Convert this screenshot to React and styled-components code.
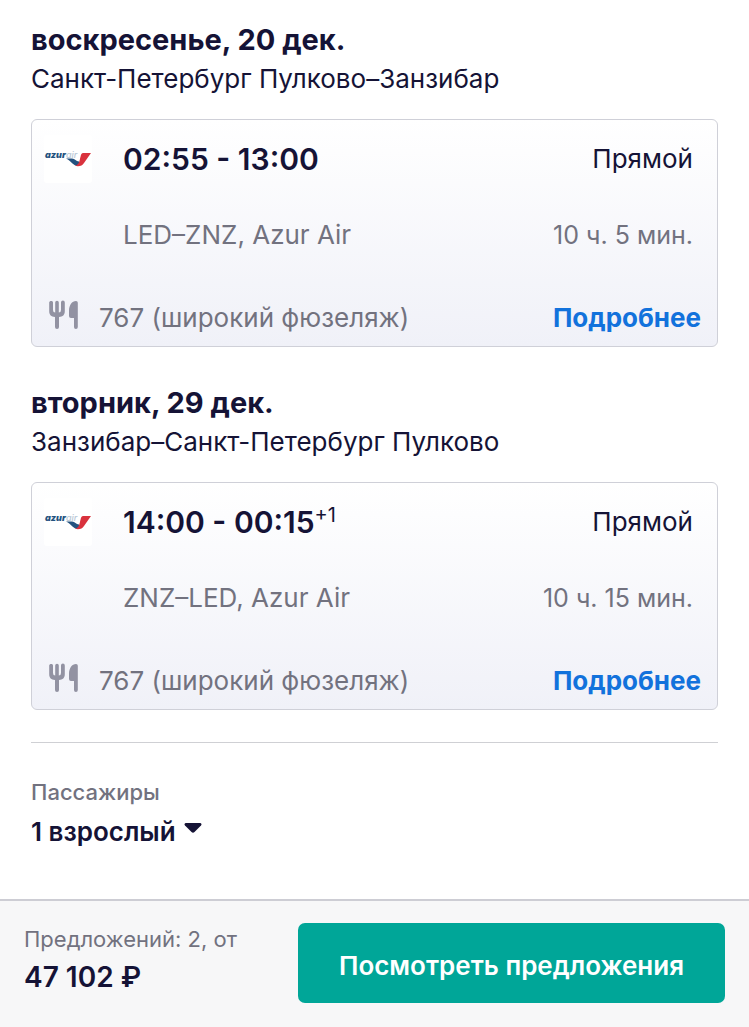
import React, { useState } from "react"
import styled, { createGlobalStyle } from "styled-components"

const GlobalStyle = createGlobalStyle`
  * {
    box-sizing: border-box;
  }
  body {
    margin: 0;
    background: #ffffff;
    color: #151336;
    font-family: Inter, "Noto Sans", sans-serif;
  }
`

const Page = styled.div`
  display: flex;
  flex-direction: column;
  min-height: 100vh;
`
const Content = styled.main`
  flex: 1;
  padding: 20px 31px 32px;
`
const StyledLeg = styled.section`
  margin-bottom: ${({ $last }) => ($last ? "32px" : "36px")};
`
const LegDate = styled.h2`
  margin: 0;
  font-size: 29px;
  font-weight: 700;
  line-height: 40px;
`
const LegRoute = styled.p`
  margin: 0 0 21px;
  font-size: 26px;
  line-height: 38px;
`
const Card = styled.div`
  padding: 19px 16px 8px 12px;
  border: 1px solid #cfd0d8;
  border-radius: 6px;
  background: linear-gradient(#ffffff, #f0f1f8);
`
const CardBody = styled.div`
  display: grid;
  grid-template-columns: 48px 1fr auto;
  row-gap: 36px;
  column-gap: 31px;
  padding-right: 8px;
  line-height: 40px;
`
const Logo = styled.svg`
  display: block;
  width: 48px;
  height: 48px;
  margin: -4px 0;
`
const Times = styled.div`
  font-size: 30px;
  font-weight: 600;
`
const NextDay = styled.sup`
  font-size: 20px;
  font-weight: 400;
  line-height: 0;
`
const Text = styled.div`
  font-size: 26px;
  color: ${({ $muted }) => ($muted ? "#72727f" : "#151336")};
`
const FlightText = styled(Text)`
  grid-column: 2;
`
const Stops = styled(Text)`
  text-align: right;
`
const Duration = styled(Text)`
  font-size: 25px;
  text-align: right;
`
const CardFooter = styled.div`
  display: flex;
  align-items: center;
  gap: 20px;
  margin-top: 43px;
  padding-left: 5px;
  line-height: 40px;
`
const Cutlery = styled.svg`
  width: 30px;
  height: 30px;
  margin-bottom: 6px;
`
const DetailsLink = styled.a`
  margin-left: auto;
  color: #1272dc;
  font-size: 26px;
  font-weight: 700;
  text-decoration: none;
`
const Passengers = styled.div`
  padding-top: 33px;
  border-top: 1px solid #cfd0d4;
`
const PassengersLabel = styled.label`
  display: block;
  color: #72727f;
  font-size: 22px;
  font-weight: 500;
  line-height: 32px;
`
const SelectRow = styled.div`
  display: flex;
  align-items: center;
  gap: 8px;
  margin-top: 4px;
`
const StyledSelect = styled.select`
  appearance: none;
  field-sizing: content;
  padding: 0;
  border: 0;
  background: transparent;
  color: inherit;
  font: 600 26px/40px Inter, "Noto Sans", sans-serif;
`
const Arrow = styled.svg`
  width: 18px;
  height: 12px;
  margin-bottom: 8px;
  pointer-events: none;
`
const BottomBar = styled.footer`
  display: flex;
  align-items: center;
  justify-content: space-between;
  padding: 22px 24px 24px;
  border-top: 2px solid #cdcdd4;
  background: #f7f7f8;
`
const Summary = styled.div`
  padding-bottom: 4px;
`
const OffersCount = styled.div`
  color: #72727f;
  font-size: 22px;
  line-height: 32px;
`
const Price = styled.div`
  font-size: 28px;
  font-weight: 600;
  line-height: 44px;
`
const OffersButton = styled.button`
  flex: 0 1 427px;
  height: 80px;
  padding: 6px 0 0;
  border: 0;
  border-radius: 7px;
  background: #00a698;
  color: #ffffff;
  font: 600 26px/40px Inter, "Noto Sans", sans-serif;
  cursor: pointer;
`

const legs = [
  {
    date: "воскресенье, 20 дек.",
    route: "Санкт-Петербург Пулково–Занзибар",
    times: "02:55 - 13:00",
    flight: "LED–ZNZ, Azur Air",
    duration: "10 ч. 5 мин.",
  },
  {
    date: "вторник, 29 дек.",
    route: "Занзибар–Санкт-Петербург Пулково",
    times: "14:00 - 00:15",
    nextDay: "+1",
    flight: "ZNZ–LED, Azur Air",
    duration: "10 ч. 15 мин.",
  },
]

const AzurLogo = () => (
  <Logo viewBox="0 0 48 48" role="img" aria-label="Azur Air">
    <rect width="48" height="48" rx="3" fill="#ffffff" />
    <text
      x="1"
      y="23"
      fontFamily="Inter, sans-serif"
      fontSize="9"
      fontWeight="900"
      fontStyle="italic"
      fill="#24527f"
    >
      azur
      <tspan fill="#b9c8d6" fontWeight="500">
        air
      </tspan>
    </text>
    <path d="M22 23.500h6c3 0 4 3 7 3l1 4.500c-7 1-8-5-14-7.500z" fill="#24527f" />
    <path d="M39.500 18h7.500l-7 10c-2 3-4 3.500-9 3 3-1 4-3 5-7 1-4 1-6 3.500-6z" fill="#d9323d" />
  </Logo>
)

const Leg = ({ leg, last }) => (
  <StyledLeg $last={last}>
    <LegDate>{leg.date}</LegDate>
    <LegRoute>{leg.route}</LegRoute>
    <Card>
      <CardBody>
        <AzurLogo />
        <Times>
          {leg.times}
          {leg.nextDay && <NextDay>{leg.nextDay}</NextDay>}
        </Times>
        <Stops>Прямой</Stops>
        <FlightText $muted>{leg.flight}</FlightText>
        <Duration $muted>{leg.duration}</Duration>
      </CardBody>
      <CardFooter>
        <Cutlery viewBox="0 0 30 30" fill="#9292a2" aria-hidden="true">
          <path d="M2.200 1C3.400 1 4 1.600 4 2.500V10q0 2.500 2.200 2.500V2.500a1.800 1.800 0 0 1 3.600 0v10Q12 12.500 12 10V2.500a1.900 1.900 0 0 1 3.800 0V11c0 4-2 5.800-5.800 6v10a2 2 0 0 1-4 0V17C2.200 16.800.200 15 .200 11V2.500C.200 1.600 1 1 2.200 1z" />
          <path d="M27 1q1.800 0 1.800 1.800V27a1.900 1.900 0 0 1-3.800 0V18h-3q-2 0-2-2v-5c0-6 3-10 7-10z" />
        </Cutlery>
        <Text $muted>767 (широкий фюзеляж)</Text>
        <DetailsLink href="#details">Подробнее</DetailsLink>
      </CardFooter>
    </Card>
  </StyledLeg>
)

const App = () => {
  const [passengers, setPassengers] = useState("1")

  return (
    <Page>
      <GlobalStyle />
      <Content>
        {legs.map((leg, index) => (
          <Leg key={leg.date} leg={leg} last={index === legs.length - 1} />
        ))}
        <Passengers>
          <PassengersLabel htmlFor="passengers">Пассажиры</PassengersLabel>
          <SelectRow>
            <StyledSelect
              id="passengers"
              value={passengers}
              onChange={e => setPassengers(e.target.value)}
            >
              <option value="1">1 взрослый</option>
            </StyledSelect>
            <Arrow viewBox="0 0 18 12" fill="#151336" aria-hidden="true">
              <path d="M2 1h14c1.500 0 2 1.500 1 2.500l-6.500 6.500q-1.500 1.500-3 0L1 3.500C0 2.500 .500 1 2 1z" />
            </Arrow>
          </SelectRow>
        </Passengers>
      </Content>
      <BottomBar>
        <Summary>
          <OffersCount>Предложений: 2, от</OffersCount>
          <Price>47 102 ₽</Price>
        </Summary>
        <OffersButton type="button">Посмотреть предложения</OffersButton>
      </BottomBar>
    </Page>
  )
}

export default App
